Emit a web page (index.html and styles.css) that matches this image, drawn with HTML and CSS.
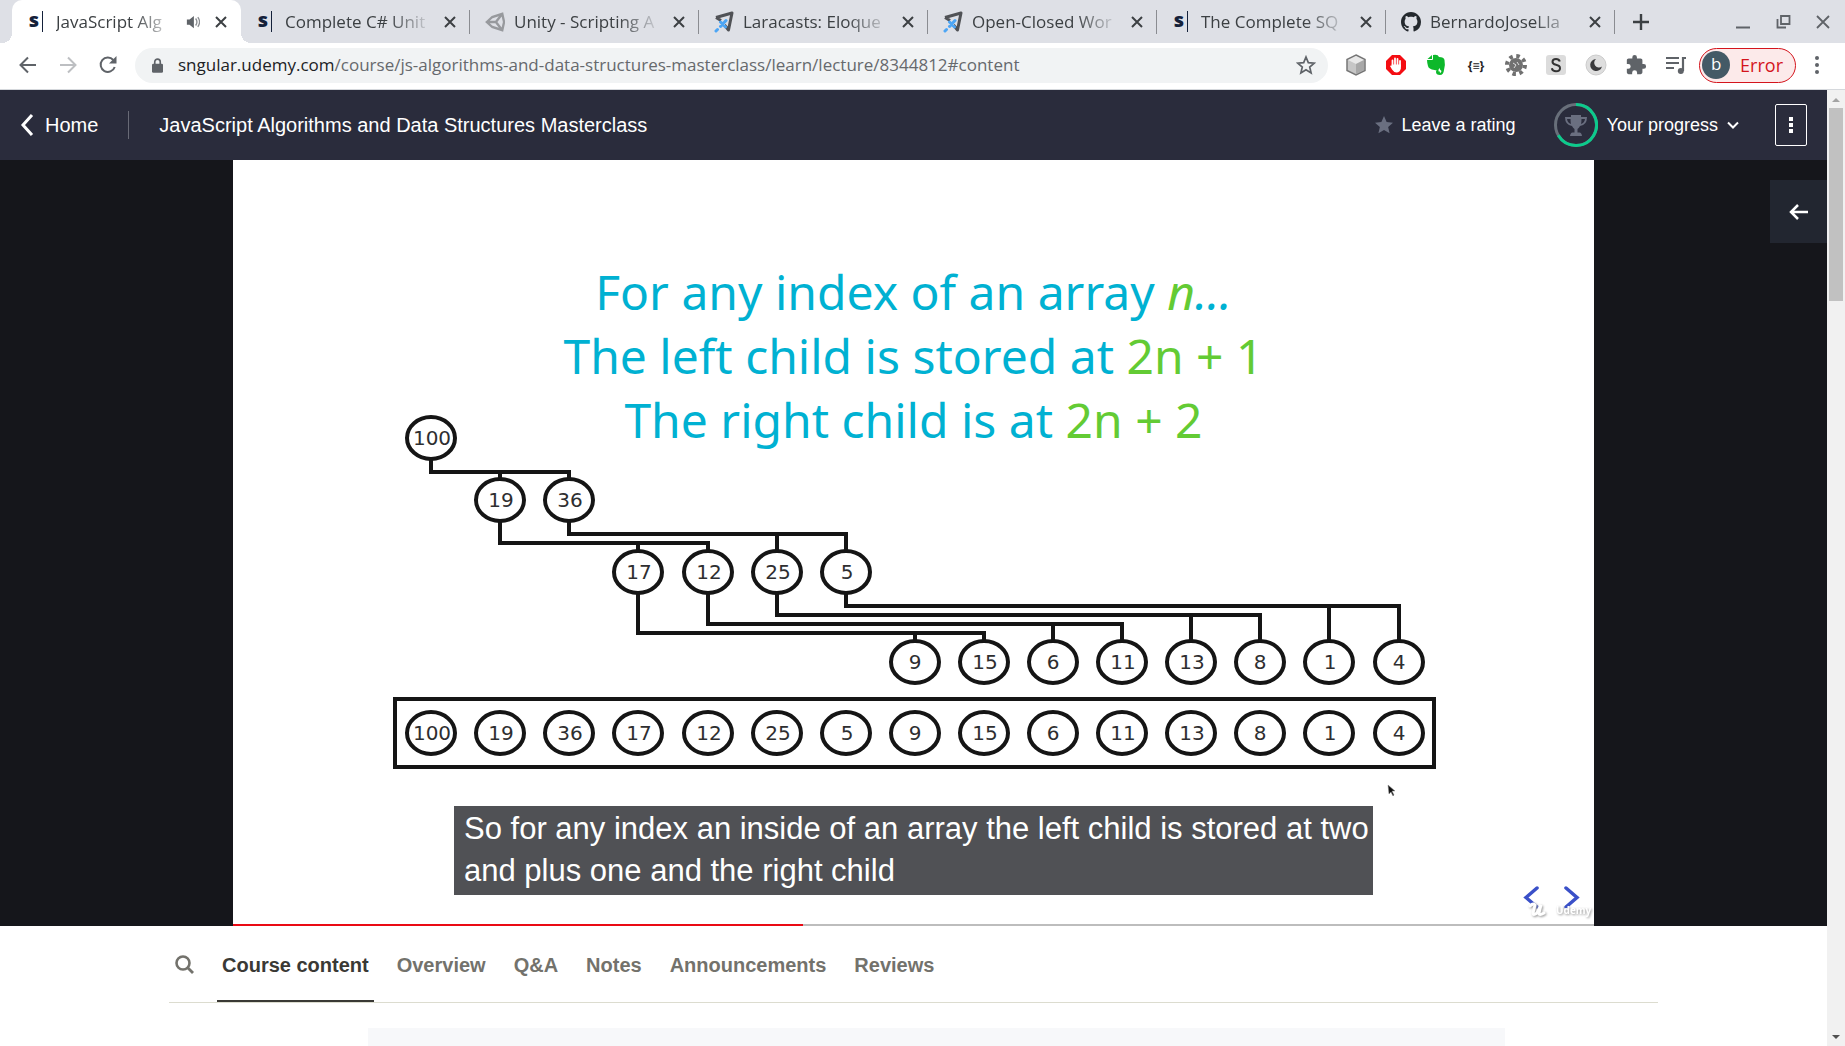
FILE: index.html
```html
<!DOCTYPE html>
<html lang="en">
<head>
<meta charset="utf-8">
<title>JavaScript Algorithms and Data Structures Masterclass</title>
<link rel="stylesheet" href="styles.css">
</head>
<body>
<svg class="defs" aria-hidden="true">
  <symbol id="close" viewBox="0 0 12 12"><path d="M1 1l10 10M11 1L1 11" fill="none" stroke="currentColor" stroke-width="2"/></symbol>
  <symbol id="rocket" viewBox="0 0 20 22"><path d="M2 6.500L18 2L14.500 19L10.500 14M2 6.500l5 3" fill="none" stroke="#505256" stroke-width="3" stroke-linejoin="round"/><path d="M12 9.500l-5.500 6M6.500 11l5 5M3.500 18.500l-1.500 1.500" stroke="#4da6f5" stroke-width="3" stroke-linecap="round" fill="none"/></symbol>
</svg>

<header class="browser">
  <div class="strip">
    <div class="tab tab-active">
      <span class="fav fav-s">s</span>
      <span class="tab-title">JavaScript Alg</span>
      <svg class="audio" viewBox="0 0 16 16"><path d="M1 5h3l5-4v14l-5-4H1z" fill="#5f6368"/><path d="M11 4q3 4 0 8M13.500 2.500q4 5.500 0 11" stroke="#8a8d91" stroke-width="1.500" fill="none"/></svg>
      <button class="tab-close" aria-label="Close tab"><svg><use href="#close"/></svg></button>
    </div>
    <div class="tab">
      <span class="fav fav-s">s</span>
      <span class="tab-title">Complete C# Unit</span>
      <button class="tab-close" aria-label="Close tab"><svg><use href="#close"/></svg></button>
    </div>
    <div class="tab">
      <svg class="fav" viewBox="0 0 22 22"><path d="M2 11L8 5.500L19 2L21 11L19 20L8 16.500ZM2 11H12L19 2M12 11L19 20" fill="none" stroke="#97999d" stroke-width="2.600"/></svg>
      <span class="tab-title">Unity - Scripting A</span>
      <button class="tab-close" aria-label="Close tab"><svg><use href="#close"/></svg></button>
    </div>
    <div class="tab">
      <svg class="fav"><use href="#rocket"/></svg>
      <span class="tab-title">Laracasts: Eloque</span>
      <button class="tab-close" aria-label="Close tab"><svg><use href="#close"/></svg></button>
    </div>
    <div class="tab">
      <svg class="fav"><use href="#rocket"/></svg>
      <span class="tab-title">Open-Closed Wor</span>
      <button class="tab-close" aria-label="Close tab"><svg><use href="#close"/></svg></button>
    </div>
    <div class="tab">
      <span class="fav fav-s">s</span>
      <span class="tab-title">The Complete SQ</span>
      <button class="tab-close" aria-label="Close tab"><svg><use href="#close"/></svg></button>
    </div>
    <div class="tab">
      <svg class="fav" viewBox="0 0 16 16"><path fill="#24292e" d="M8 0C3.580 0 0 3.580 0 8c0 3.540 2.290 6.530 5.470 7.590.4.070.55-.17.55-.38 0-.19-.01-.82-.01-1.490-2.010.37-2.530-.49-2.690-.94-.09-.23-.48-.94-.82-1.130-.28-.15-.68-.52-.01-.53.63-.01 1.080.58 1.230.82.72 1.210 1.870.87 2.330.66.07-.52.28-.87.51-1.070-1.780-.2-3.640-.89-3.640-3.950 0-.87.31-1.590.82-2.150-.08-.2-.36-1.020.08-2.120 0 0 .67-.21 2.200.82.64-.18 1.320-.27 2-.27s1.360.09 2 .27c1.530-1.040 2.200-.82 2.200-.82.44 1.100.16 1.920.08 2.120.51.56.82 1.270.82 2.150 0 3.070-1.870 3.750-3.650 3.950.29.25.54.73.54 1.480 0 1.070-.01 1.930-.01 2.200 0 .21.15.46.55.38A8 8 0 0 0 16 8c0-4.420-3.580-8-8-8z"/></svg>
      <span class="tab-title">BernardoJoseLla</span>
      <button class="tab-close" aria-label="Close tab"><svg><use href="#close"/></svg></button>
    </div>
    <button class="new-tab" aria-label="New tab"><svg viewBox="0 0 16 16"><path d="M8 0v16M0 8h16" stroke="#3c4043" stroke-width="2.400"/></svg></button>
    <div class="window-controls">
      <button aria-label="Minimise"><svg viewBox="0 0 16 16"><path d="M1 13.500h14" stroke="#5f6368" stroke-width="2"/></svg></button>
      <button aria-label="Restore"><svg viewBox="0 0 16 16"><path d="M6 2h8.500v8H6zM2.500 5v8.500H11" fill="none" stroke="#5f6368" stroke-width="1.800"/></svg></button>
      <button aria-label="Close window"><svg viewBox="0 0 16 16"><path d="M2 2l12 12M14 2L2 14" stroke="#5f6368" stroke-width="1.800"/></svg></button>
    </div>
  </div>

  <div class="toolbar">
    <div class="nav-buttons">
      <button aria-label="Back"><svg viewBox="0 0 18 18"><path d="M17 9H2M9 1.500L1.500 9L9 16.500" fill="none" stroke="#5f6368" stroke-width="2"/></svg></button>
      <button aria-label="Forward"><svg viewBox="0 0 18 18"><path d="M1 9H16M9 1.500L16.500 9L9 16.500" fill="none" stroke="#bdbfc2" stroke-width="2"/></svg></button>
      <button aria-label="Reload"><svg viewBox="0 0 18 18"><path d="M15.700 11A7.200 7.200 0 1 1 14.300 4" fill="none" stroke="#5f6368" stroke-width="2"/><path d="M17.500 0v7.500H10z" fill="#5f6368"/></svg></button>
    </div>
    <div class="omnibox">
      <svg class="lock" viewBox="0 0 12 16"><rect y="6" width="12" height="10" rx="1.500" fill="#5f6368"/><path d="M3 7V4a3 3 0 0 1 6 0v3" fill="none" stroke="#5f6368" stroke-width="1.800"/></svg>
      <a class="url" href="#content"><span class="host">sngular.udemy.com</span>/course/js-algorithms-and-data-structures-masterclass/learn/lecture/8344812#content</a>
      <button class="bookmark" aria-label="Bookmark this page"><svg viewBox="0 0 20 20"><path d="M10 2l2.300 5.600 6 .5-4.600 3.900 1.400 5.900L10 14.700l-5.100 3.200L6.300 12 1.700 8.100l6-.5z" fill="none" stroke="#5f6368" stroke-width="1.700"/></svg></button>
    </div>
    <div class="extensions">
      <button aria-label="Cube"><svg viewBox="0 0 22 22"><path d="M11 1l9 4.500v11L11 21l-9-4.500v-11z" fill="#c6c6c6" stroke="#777" stroke-width="1.500"/><path d="M11 2l8 4-8 4-8-4z" fill="#e8e8e8"/><path d="M11 10l8-4v10l-8 4z" fill="#a8a8a8"/></svg></button>
      <button aria-label="Blocker"><svg viewBox="0 0 22 22"><path d="M7 1h8l6 6v8l-6 6H7l-6-6V7z" fill="#f40d12"/><path d="M7.500 12V6.500M10 11V4.500M12.500 11V5M15 12V7" stroke="#fff" stroke-width="1.800" stroke-linecap="round"/><path d="M6.600 10.500h9.300v4q-1 4-4.400 4-2.500 0-4.500-3l-2-3.500q1-1 1.600 0z" fill="#fff"/></svg></button>
      <button aria-label="Clipper"><svg viewBox="0 0 22 22"><path d="M8 1q5-1 6 2 5 0 5.500 3 1 5-.5 10-.5 5-4 5-4 0-4-3 0-2.500 2.500-2.500v2q1.500-1 1.500 1.500 1 0 1.500-2-2-1.500-2-3-1 3-5 2-6-1-6.500-4-1-4-1-6H7q1 0 1-1z" fill="#0db82b"/><path d="M2.500 5L7 1v4z" fill="#0db82b"/></svg></button>
      <button aria-label="Snippets"><span class="braces">{≡}</span></button>
      <button aria-label="Debugger"><svg viewBox="0 0 22 22"><circle cx="11" cy="11" r="7" fill="#707070"/><circle cx="11" cy="11" r="9" fill="none" stroke="#707070" stroke-width="4" stroke-dasharray="3.500 3.570"/><path d="M8 9l3 2-2 3M12 8l2 3" stroke="#ddd" fill="none"/></svg></button>
      <button aria-label="Sources"><svg viewBox="0 0 22 22"><rect x="1" y="1" width="20" height="20" rx="3" fill="#dcdcdc"/><path d="M14.800 7.500Q14 5 11 5 7.500 5 7.500 7.800q0 2.300 3.500 3 4 .8 4 3.400 0 3-4 3-3.500 0-4.200-3" fill="none" stroke="#333" stroke-width="2"/></svg></button>
      <button aria-label="Dark mode"><svg viewBox="0 0 22 22"><circle cx="11" cy="11" r="10" fill="#dedede" stroke="#ccc"/><path d="M11 5a6 6 0 1 0 6 7.500A4.800 4.800 0 0 1 11 5z" fill="#3a3a3c"/></svg></button>
      <button aria-label="Extensions"><svg viewBox="0 0 24 24"><path fill="#5f6368" d="M20.500 11H19V7c0-1.100-.9-2-2-2h-4V3.500a2.500 2.500 0 0 0-5 0V5H4c-1.100 0-2 .9-2 2v3.800h1.500a2.700 2.700 0 0 1 0 5.400H2V20c0 1.100.9 2 2 2h3.800v-1.500a2.700 2.700 0 0 1 5.400 0V22H17c1.100 0 2-.9 2-2v-4h1.500a2.500 2.500 0 0 0 0-5z"/></svg></button>
      <button aria-label="Media"><svg viewBox="0 0 22 22"><path d="M1 4h13M1 9h13M1 14h8M21 4h-3v13" fill="none" stroke="#5f6368" stroke-width="2.200"/><circle cx="15.800" cy="17" r="3" fill="#5f6368"/></svg></button>
    </div>
    <button class="profile"><span class="avatar">b</span>Error</button>
    <button class="kebab" aria-label="Menu"><svg viewBox="0 0 6 20"><circle cx="3" cy="3" r="2" fill="#5f6368"/><circle cx="3" cy="10" r="2" fill="#5f6368"/><circle cx="3" cy="17" r="2" fill="#5f6368"/></svg></button>
  </div>
</header>

<div class="viewport">
  <div class="page">
    <header class="course-bar">
      <a class="home" href="#home"><svg viewBox="0 0 14 24"><path d="M12 2L3 12l9 10" fill="none" stroke="#fff" stroke-width="3"/></svg>Home</a>
      <h1 class="course-title">JavaScript Algorithms and Data Structures Masterclass</h1>
      <button class="rating"><svg viewBox="0 0 20 20"><path d="M10 0l2.900 6.700 7.100.7-5.400 4.800 1.600 7.100L10 15.600l-6.200 3.700 1.600-7.100L0 7.400l7.100-.7z" fill="#6a6f80"/></svg>Leave a rating</button>
      <button class="progress">
        <svg class="ring" viewBox="0 0 44 44"><circle cx="22" cy="22" r="20.500" fill="none" stroke="#686f7a" stroke-width="3"/><path d="M22 1.500A20.500 20.500 0 1 1 4.300 32.300" fill="none" stroke="#0ccb8c" stroke-width="3"/><path d="M17 12h10v2h6q0 8-7 9-1 2-2.500 3v3.500h2q2 0 2.500 3.500h-12q.5-3.500 2.500-3.500h2V26Q19 25 18 23q-7-1-7-9h6zM13 16q.5 4 4 5-.5-2.500-.5-5zm18 0h-3.500q0 2.500-.5 5 3.500-1 4-5z" fill="#6a6f80" fill-rule="evenodd"/></svg>
        Your progress
        <svg class="chevron" viewBox="0 0 12 8"><path d="M1 1.500l5 5 5-5" fill="none" stroke="#fff" stroke-width="2"/></svg>
      </button>
      <button class="more" aria-label="More options"><svg viewBox="0 0 4 16"><path d="M0 0h4v4H0zM0 6h4v4H0zM0 12h4v4H0z" fill="#fff"/></svg></button>
    </header>

    <main>
      <section class="stage">
        <div class="slide">
          <div class="formula">
            <p>For any index of an array <em><b>n</b>...</em></p>
            <p>The left child is stored at <b>2n + 1</b></p>
            <p>The right child is at <b>2n + 2</b></p>
          </div>
          <svg class="heap" viewBox="0 0 1361 766">
            <g class="wires">
              <path d="M198 300V312H336V320M267 312V320"/>
              <path d="M267 362V383H475V392M405 383V392"/>
              <path d="M336 362V374H613V392M544 374V392"/>
              <path d="M613 434V446H1166V482M1096 446V482"/>
              <path d="M544 434V455H1027V482M958 455V482"/>
              <path d="M475 434V464H889V482M820 464V482"/>
              <path d="M405 434V473H751V482M682 473V482"/>
              <rect x="162" y="539" width="1039" height="68"/>
            </g>
            <g class="nodes">
              <ellipse cx="198" cy="278" rx="24" ry="21"/><ellipse cx="267" cy="340" rx="24" ry="21"/><ellipse cx="336" cy="340" rx="24" ry="21"/>
              <ellipse cx="405" cy="412" rx="24" ry="21"/><ellipse cx="475" cy="412" rx="24" ry="21"/><ellipse cx="544" cy="412" rx="24" ry="21"/><ellipse cx="613" cy="412" rx="24" ry="21"/>
              <ellipse cx="682" cy="502" rx="24" ry="21"/><ellipse cx="751" cy="502" rx="24" ry="21"/><ellipse cx="820" cy="502" rx="24" ry="21"/><ellipse cx="889" cy="502" rx="24" ry="21"/><ellipse cx="958" cy="502" rx="24" ry="21"/><ellipse cx="1027" cy="502" rx="24" ry="21"/><ellipse cx="1096" cy="502" rx="24" ry="21"/><ellipse cx="1166" cy="502" rx="24" ry="21"/>
              <ellipse cx="198" cy="573" rx="24" ry="21"/><ellipse cx="267" cy="573" rx="24" ry="21"/><ellipse cx="336" cy="573" rx="24" ry="21"/><ellipse cx="405" cy="573" rx="24" ry="21"/><ellipse cx="475" cy="573" rx="24" ry="21"/><ellipse cx="544" cy="573" rx="24" ry="21"/><ellipse cx="613" cy="573" rx="24" ry="21"/><ellipse cx="682" cy="573" rx="24" ry="21"/><ellipse cx="751" cy="573" rx="24" ry="21"/><ellipse cx="820" cy="573" rx="24" ry="21"/><ellipse cx="889" cy="573" rx="24" ry="21"/><ellipse cx="958" cy="573" rx="24" ry="21"/><ellipse cx="1027" cy="573" rx="24" ry="21"/><ellipse cx="1096" cy="573" rx="24" ry="21"/><ellipse cx="1166" cy="573" rx="24" ry="21"/>
            </g>
            <g class="values">
              <text x="199" y="285">100</text><text x="268" y="347">19</text><text x="337" y="347">36</text>
              <text x="406" y="419">17</text><text x="476" y="419">12</text><text x="545" y="419">25</text><text x="614" y="419">5</text>
              <text x="682" y="509">9</text><text x="752" y="509">15</text><text x="820" y="509">6</text><text x="890" y="509">11</text><text x="959" y="509">13</text><text x="1027" y="509">8</text><text x="1097" y="509">1</text><text x="1166" y="509">4</text>
              <text x="199" y="580">100</text><text x="268" y="580">19</text><text x="337" y="580">36</text><text x="406" y="580">17</text><text x="476" y="580">12</text><text x="545" y="580">25</text><text x="614" y="580">5</text><text x="682" y="580">9</text><text x="752" y="580">15</text><text x="820" y="580">6</text><text x="890" y="580">11</text><text x="959" y="580">13</text><text x="1027" y="580">8</text><text x="1097" y="580">1</text><text x="1166" y="580">4</text>
            </g>
            <path d="M1155 625l1 9 2-2 2 4 1-1-2-4h3z" fill="#111" stroke="#888" stroke-width=".5"/>
            <path d="M1304 728l-11 9.500 11 9.500M1333 728l11 9.500-11 9.500" fill="none" stroke="#3a50c8" stroke-width="3.500" stroke-linecap="round"/>
            <g class="watermark"><path d="M1297 746q3-3 5-1l-2 8q0 3 4 0l4-8-2 8q0 3 5 0" fill="none" stroke="#fff" stroke-width="3" stroke-linecap="round"/><text x="1323" y="754">Udemy</text></g>
          </svg>
          <p class="caption">So for any index an inside of an array the left child is stored at two and plus one and the right child</p>
          <progress class="playback" value="419" max="1000" aria-label="Playback position"></progress>
        </div>
        <button class="open-sidebar" aria-label="Open course content"><svg viewBox="0 0 20 16"><path d="M19 8H2M9 1L2 8l7 7" fill="none" stroke="#fff" stroke-width="2.500"/></svg></button>
      </section>

      <nav class="tabs">
        <button class="search" aria-label="Search"><svg viewBox="0 0 19 19"><circle cx="8" cy="8" r="6.500" fill="none" stroke="#73726c" stroke-width="2.600"/><path d="M12.500 12.500l5.500 5.500" stroke="#73726c" stroke-width="2.800"/></svg></button>
        <a class="current" href="#content">Course content</a>
        <a href="#overview">Overview</a>
        <a href="#qa">Q&amp;A</a>
        <a href="#notes">Notes</a>
        <a href="#announcements">Announcements</a>
        <a href="#reviews">Reviews</a>
      </nav>
      <section class="panel" id="content"></section>
    </main>
  </div>
  <div class="scrollbar" aria-hidden="true">
    <svg viewBox="0 0 10 6"><path d="M5 1l4 4H1z" fill="#a3a3a3"/></svg>
    <div class="thumb"></div>
    <svg viewBox="0 0 10 6"><path d="M5 5l4-4H1z" fill="#505050"/></svg>
  </div>
</div>
</body>
</html>
```
FILE: styles.css
```css
* { box-sizing: border-box; }
body { margin: 0; height: 100vh; display: flex; flex-direction: column; overflow: hidden; background: #fff; font-family: "Liberation Sans", Arial, sans-serif; }
button { padding: 0; border: 0; background: none; color: inherit; font: inherit; display: flex; align-items: center; justify-content: center; flex: none; }
svg { display: block; flex: none; }
a { color: inherit; text-decoration: none; }
p, h1 { margin: 0; font-weight: normal; }
.defs { position: absolute; width: 0; height: 0; }

.browser { font-family: "Open Sans", "Noto Sans", sans-serif; flex: none; }
.strip { display: flex; height: 43px; background: #dee0e6; padding-left: 12px; }
.tab { flex: 0 1 229px; min-width: 0; display: flex; align-items: center; padding: 0 11px 0 15px; color: #3c4043; position: relative; }
.tab:not(.tab-active)::after { content: ""; position: absolute; right: 0; top: 10px; width: 1px; height: 24px; background: #8a8c91; }
.tab-active { background: #fff; border-radius: 10px 10px 0 0; }
.tab-active::before, .tab-active::after { content: ""; position: absolute; bottom: 0; width: 10px; height: 10px; }
.tab-active::before { left: -10px; background: radial-gradient(circle at 0 0, transparent 10px, #fff 10px); }
.tab-active::after { right: -10px; background: radial-gradient(circle at 100% 0, transparent 10px, #fff 10px); }
.fav { width: 20px; height: 22px; flex: none; }
.fav-s { width: 16px; height: 21px; margin-right: 4px; padding-right: 3px; border-right: 1px solid #14213a; color: #14213a; font-size: 20px; font-weight: 800; line-height: 18px; text-align: right; }
.tab-title { flex: 1; min-width: 0; margin-left: 9px; overflow: hidden; white-space: nowrap; font-size: 17px; line-height: 24px; -webkit-mask-image: linear-gradient(90deg, #000 calc(100% - 44px), transparent); mask-image: linear-gradient(90deg, #000 calc(100% - 44px), transparent); }
.audio { width: 14px; height: 14px; margin: 0 4px 0 9px; }
.tab-close { width: 18px; height: 18px; margin-left: 8px; }
.tab-close svg { width: 12px; height: 12px; }
.new-tab { width: 52px; }
.new-tab svg { width: 16px; height: 16px; }
.window-controls { display: flex; gap: 24px; margin-left: auto; padding-right: 14px; }
.window-controls svg { width: 16px; height: 16px; }

.toolbar { display: flex; align-items: center; height: 47px; padding: 0 25px 2px 18px; border-bottom: 1px solid #d5d8dc; background: #fff; }
.nav-buttons { display: flex; gap: 22px; padding: 0 18px 0 1px; }
.nav-buttons svg { width: 18px; height: 18px; }
.omnibox { flex: 1; min-width: 0; display: flex; align-items: center; height: 35px; padding: 0 12px 0 17px; border-radius: 18px; background: #f1f3f4; }
.lock { width: 11px; height: 15px; margin-right: 15px; }
.url { flex: 1; min-width: 0; overflow: hidden; white-space: nowrap; font-size: 17px; line-height: 24px; color: #66696d; }
.host { color: #202124; }
.bookmark svg { width: 20px; height: 20px; }
.extensions { display: flex; gap: 18px; padding: 0 12px 0 17px; }
.extensions button, .extensions svg { width: 22px; height: 22px; }
.braces { font-size: 12px; font-weight: 700; color: #222; }
.profile { height: 35px; gap: 10px; padding: 0 12px 0 2px; border: 1px solid #d4141c; border-radius: 18px; background: #fceaea; color: #d4141c; font-size: 18px; }
.avatar { width: 28px; height: 28px; border-radius: 50%; background: #445a66; color: #fff; line-height: 26px; font-size: 17px; }
.kebab { margin-left: 18px; }
.kebab svg { width: 6px; height: 20px; }

.viewport { flex: 1; min-height: 0; display: flex; }
.page { flex: 1; min-width: 0; overflow: hidden; }
.course-bar { display: flex; align-items: center; height: 70px; padding: 0 20px; background: #2a2c3c; color: #fff; font-size: 18px; }
.home { display: flex; align-items: center; gap: 11px; height: 28px; padding-right: 30px; border-right: 1px solid #686a76; font-size: 20px; }
.home svg { width: 14px; height: 24px; }
.course-title { padding-left: 30px; font-size: 20px; flex: 1; }
.rating { gap: 9px; }
.rating svg { width: 18px; height: 18px; }
.progress { gap: 9px; margin: 0 36px 0 38px; }
.ring { width: 44px; height: 44px; }
.chevron { width: 12px; height: 8px; }
.more { width: 32px; height: 42px; border: 1px solid #fff; border-radius: 2px; }
.more svg { width: 4px; height: 16px; }

.stage { position: relative; display: flex; justify-content: center; background: #15161b; }
.slide { position: relative; width: 1361px; max-width: 75%; aspect-ratio: 1361 / 766; background: #fff; display: grid; }
.formula { grid-area: 1 / 1; padding-top: 100px; text-align: center; font-family: "Noto Sans", "Open Sans", sans-serif; font-size: 48px; line-height: 64px; color: #00b1d2; }
.formula b { font-weight: normal; color: #63cb34; }
.heap { grid-area: 1 / 1; width: 100%; height: 100%; }
.wires { fill: none; stroke: #151515; stroke-width: 4; }
.nodes { fill: #fff; stroke: #151515; stroke-width: 4; }
.values { font: 20px "DejaVu Sans", sans-serif; fill: #2e2e30; text-anchor: middle; }
.watermark { font: bold 10px "Open Sans", sans-serif; fill: #fff; filter: drop-shadow(1px 1px 1px #999); }
.caption { position: absolute; left: 221px; right: 221px; bottom: 31px; padding: 2px 4px 3px 10px; background: #505155; color: #fff; font-size: 31px; line-height: 42px; }
.playback { position: absolute; left: 0; bottom: 0; width: 100%; height: 2px; appearance: none; border: 0; }
.playback::-webkit-progress-bar { background: #bdbdbd; }
.playback::-webkit-progress-value { background: #ea0a14; }
.open-sidebar { position: absolute; right: 0; top: 20px; width: 57px; height: 63px; background: #222630; }
.open-sidebar svg { width: 20px; height: 16px; }

.tabs { display: flex; align-items: stretch; gap: 18px; height: 77px; margin: 0 169px; border-bottom: 1px solid #dcdccf; color: #73726c; font-size: 20px; font-weight: bold; line-height: 78px; }
.tabs a { padding: 0 5px; }
.tabs .current { color: #3a3935; border-bottom: 2px solid #3a3935; }
.search { width: 30px; }
.search svg { width: 19px; height: 19px; }
.panel { height: 120px; margin: 25px 322px 0 368px; background: #f7f8fa; }

.scrollbar { width: 18px; flex: none; background: #f1f1f1; display: flex; flex-direction: column; align-items: center; padding: 7px 0 6px; }
.scrollbar svg { width: 10px; height: 6px; }
.thumb { width: 14px; height: 193px; margin: 5px 0 auto; background: #c1c1c1; }
```
